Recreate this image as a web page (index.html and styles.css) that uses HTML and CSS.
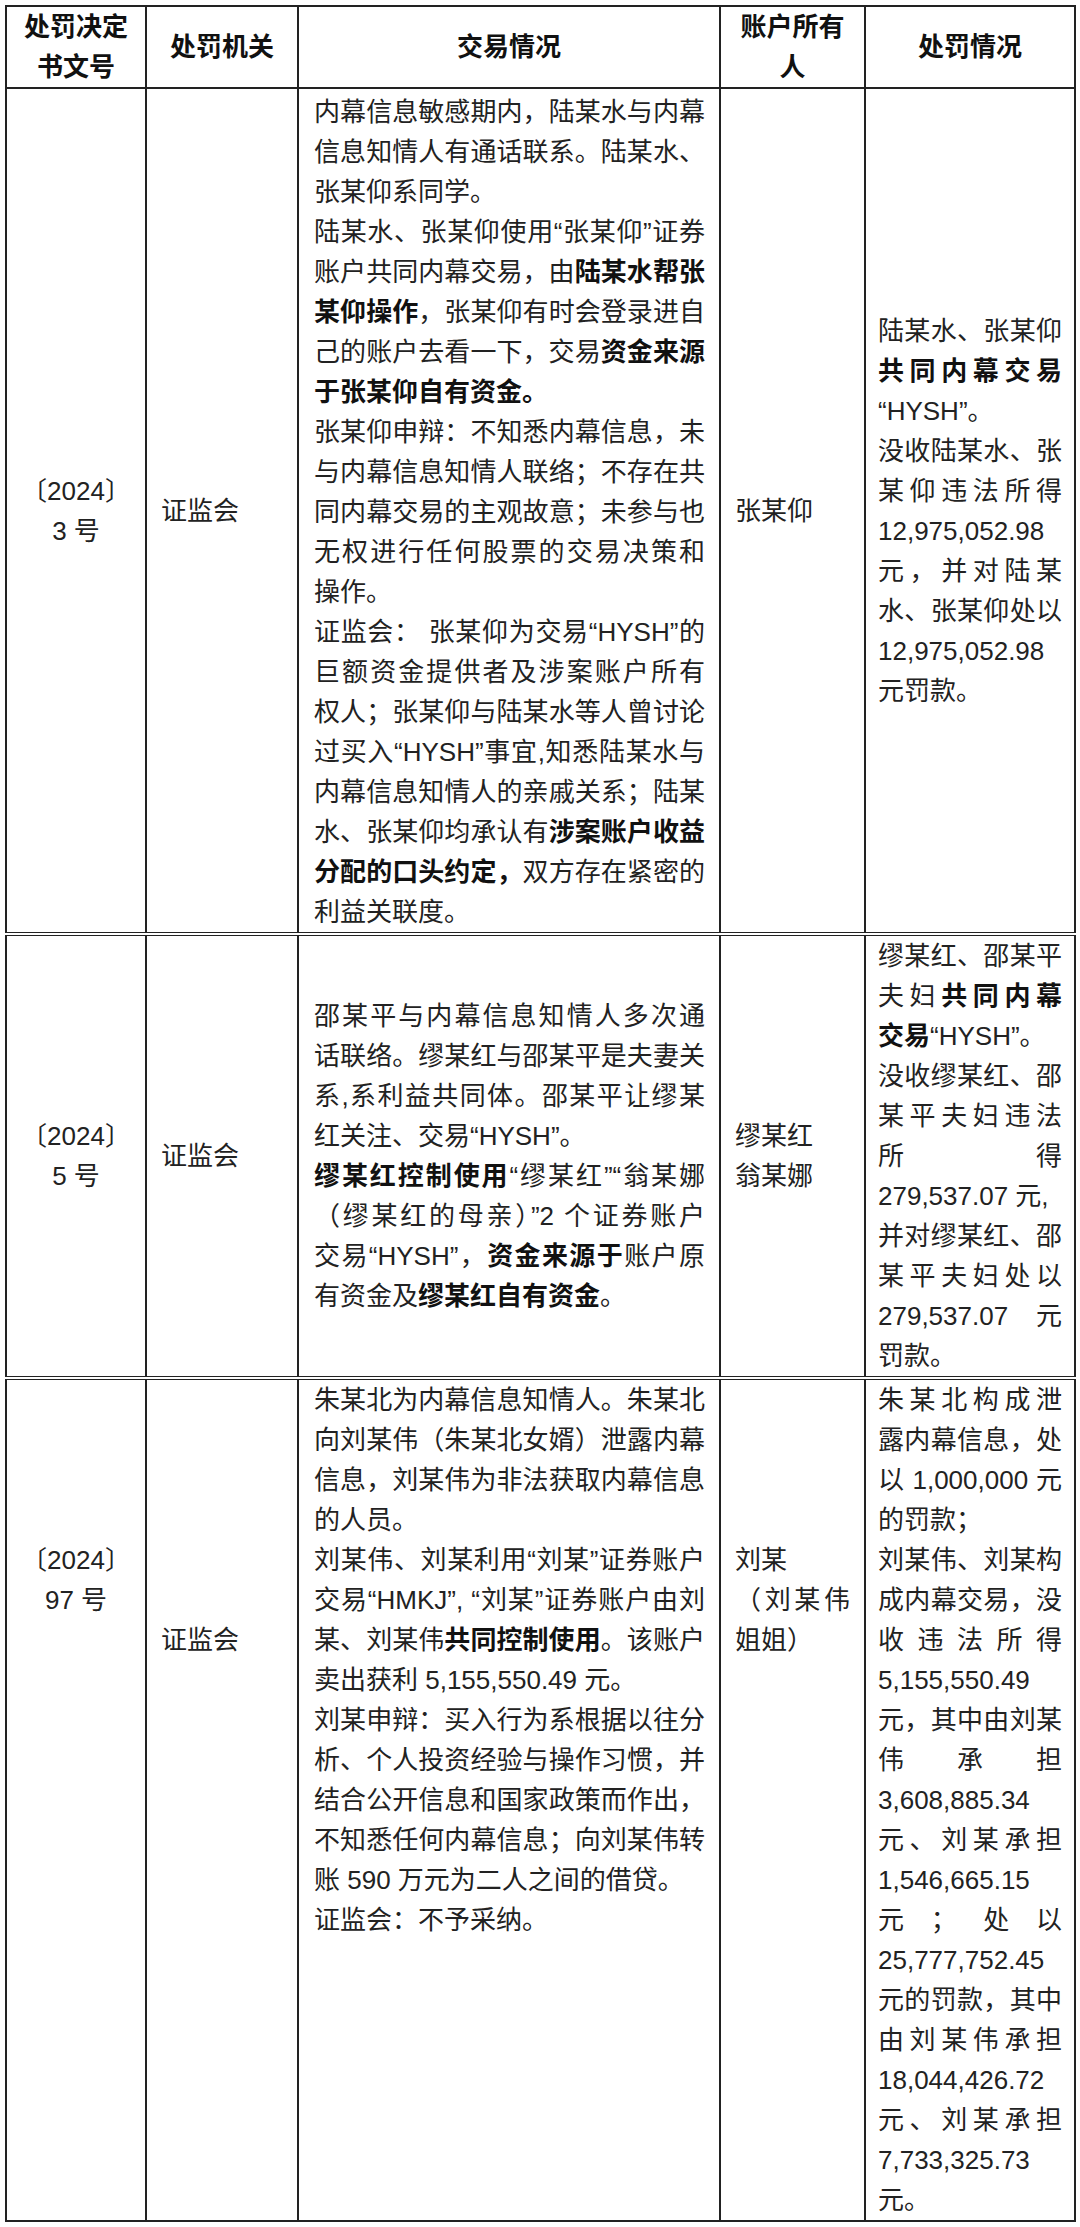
FILE: index.html
```html
<!DOCTYPE html>
<html lang="zh-CN">
<head>
<meta charset="utf-8">
<title>处罚决定</title>
<link rel="stylesheet" href="styles.css">
</head>
<body>
<table class="penalty">
  <colgroup>
    <col class="w-no">
    <col class="w-org">
    <col class="w-deal">
    <col class="w-owner">
    <col class="w-pen">
  </colgroup>
  <thead>
    <tr>
      <th>处罚决定书文号</th>
      <th>处罚机关</th>
      <th>交易情况</th>
      <th>账户所有人</th>
      <th>处罚情况</th>
    </tr>
  </thead>
  <tbody>
    <tr>
      <td class="c-no"><span class="case">〔2024〕</span><br>3 号</td>
      <td class="c-org">证监会</td>
      <td class="c-deal first">
        <p><span class="ln">内幕信息敏感期内，陆某水与内幕</span><span class="ln">信息知情人有通话联系。陆某水、</span><span class="ln e">张某仰系同学。</span></p>
        <p><span class="ln">陆某水、张某仰使用“张某仰”证券</span><span class="ln">账户共同内幕交易，由<b>陆某水帮张</b></span><span class="ln"><b>某仰操作</b>，张某仰有时会登录进自</span><span class="ln">己的账户去看一下，交易<b>资金来源</b></span><span class="ln e"><b>于张某仰自有资金。</b></span></p>
        <p><span class="ln">张某仰申辩：不知悉内幕信息，未</span><span class="ln">与内幕信息知情人联络；不存在共</span><span class="ln">同内幕交易的主观故意；未参与也</span><span class="ln">无权进行任何股票的交易决策和</span><span class="ln e">操作。</span></p>
        <p><span class="ln">证监会： 张某仰为交易“HYSH”的</span><span class="ln">巨额资金提供者及涉案账户所有</span><span class="ln">权人；张某仰与陆某水等人曾讨论</span><span class="ln">过买入“HYSH”事宜,知悉陆某水与</span><span class="ln">内幕信息知情人的亲戚关系；陆某</span><span class="ln">水、张某仰均承认有<b>涉案账户收益</b></span><span class="ln"><b>分配的口头约定，</b>双方存在紧密的</span><span class="ln e">利益关联度。</span></p>
      </td>
      <td class="c-owner">张某仰</td>
      <td class="c-pen">
        <p><span class="ln">陆某水、张某仰</span><span class="ln"><b>共同内幕交易</b></span><span class="ln e">“HYSH”。</span></p>
        <p><span class="ln">没收陆某水、张</span><span class="ln">某仰违法所得</span><span class="ln">12,975,052.98</span><span class="ln">元，并对陆某</span><span class="ln">水、张某仰处以</span><span class="ln">12,975,052.98</span><span class="ln e">元罚款。</span></p>
      </td>
    </tr>
    <tr class="sep">
      <td class="c-no"><span class="case">〔2024〕</span><br>5 号</td>
      <td class="c-org">证监会</td>
      <td class="c-deal">
        <p><span class="ln">邵某平与内幕信息知情人多次通</span><span class="ln">话联络。缪某红与邵某平是夫妻关</span><span class="ln">系,系利益共同体。邵某平让缪某</span><span class="ln e">红关注、交易“HYSH”。</span></p>
        <p><span class="ln"><b>缪某红控制使用</b>“缪某红”“翁某娜</span><span class="ln">（缪某红的母亲）”2 个证券账户</span><span class="ln">交易“HYSH”，<b>资金来源于</b>账户原</span><span class="ln e">有资金及<b>缪某红自有资金</b>。</span></p>
      </td>
      <td class="c-owner">缪某红<br>翁某娜</td>
      <td class="c-pen">
        <p><span class="ln">缪某红、邵某平</span><span class="ln">夫妇<b>共同内幕</b></span><span class="ln e"><b>交易</b>“HYSH”。</span></p>
        <p><span class="ln">没收缪某红、邵</span><span class="ln">某平夫妇违法</span><span class="ln">所得</span><span class="ln e">279,537.07 元,</span><span class="ln">并对缪某红、邵</span><span class="ln">某平夫妇处以</span><span class="ln">279,537.07 元</span><span class="ln e">罚款。</span></p>
      </td>
    </tr>
    <tr class="sep">
      <td class="c-no top off4"><span class="case">〔2024〕</span><br>97 号</td>
      <td class="c-org top off6">证监会</td>
      <td class="c-deal top">
        <p><span class="ln">朱某北为内幕信息知情人。朱某北</span><span class="ln">向刘某伟（朱某北女婿）泄露内幕</span><span class="ln">信息，刘某伟为非法获取内幕信息</span><span class="ln e">的人员。</span></p>
        <p><span class="ln">刘某伟、刘某利用“刘某”证券账户</span><span class="ln">交易“HMKJ”, “刘某”证券账户由刘</span><span class="ln">某、刘某伟<b>共同控制使用</b>。该账户</span><span class="ln e">卖出获利 5,155,550.49 元。</span></p>
        <p><span class="ln">刘某申辩：买入行为系根据以往分</span><span class="ln">析、个人投资经验与操作习惯，并</span><span class="ln">结合公开信息和国家政策而作出，</span><span class="ln">不知悉任何内幕信息；向刘某伟转</span><span class="ln e">账 590 万元为二人之间的借贷。</span></p>
        <p><span class="ln e">证监会：不予采纳。</span></p>
      </td>
      <td class="c-owner top off4">
        <p><span class="ln e">刘某</span><span class="ln">（刘某伟</span><span class="ln e">姐姐）</span></p>
      </td>
      <td class="c-pen top">
        <p><span class="ln">朱某北构成泄</span><span class="ln">露内幕信息，处</span><span class="ln">以 1,000,000 元</span><span class="ln e">的罚款；</span></p>
        <p><span class="ln">刘某伟、刘某构</span><span class="ln">成内幕交易，没</span><span class="ln">收违法所得</span><span class="ln">5,155,550.49</span><span class="ln">元，其中由刘某</span><span class="ln">伟承担</span><span class="ln">3,608,885.34</span><span class="ln">元、刘某承担</span><span class="ln">1,546,665.15</span><span class="ln">元；处以</span><span class="ln">25,777,752.45</span><span class="ln">元的罚款，其中</span><span class="ln">由刘某伟承担</span><span class="ln">18,044,426.72</span><span class="ln">元、刘某承担</span><span class="ln">7,733,325.73</span><span class="ln e">元。</span></p>
      </td>
    </tr>
  </tbody>
</table>
</body>
</html>
```

FILE: styles.css
```css
html, body {
  margin: 0;
  padding: 0;
  background: #ffffff;
}

body {
  color: #222222;
  font-family: "Liberation Sans", "Noto Sans CJK SC", sans-serif;
  font-size: 26px;
}

.penalty {
  border-collapse: collapse;
  table-layout: fixed;
  width: 1071px;
  margin: 5px 0 0 5px;
}

.w-no { width: 140px; }
.w-org { width: 152px; }
.w-deal { width: 422px; }
.w-owner { width: 145px; }
.w-pen { width: 210px; }

.penalty th,
.penalty td {
  border: 2px solid #222222;
  padding: 0 14px;
  line-height: 40px;
  vertical-align: middle;
  text-align: left;
}

.penalty th {
  font-weight: 700;
  text-align: center;
  color: #111111;
}

.penalty .sep td {
  border-top: 4px double #222222;
}

.penalty p {
  margin: 0;
}

.penalty b {
  font-weight: 700;
  color: #111111;
}

.ln {
  display: block;
  text-align: justify;
  text-align-last: justify;
}

.ln.e {
  text-align-last: left;
}

.penalty td.c-no {
  text-align: center;
  padding: 0 8px;
}

.case {
  font-feature-settings: "halt";
}

.penalty td.c-deal {
  padding: 0 14px 0 15px;
}

.penalty td.c-deal.first {
  padding-top: 3px;
}

.penalty td.c-pen {
  padding: 0 12px;
}

.penalty td.top {
  vertical-align: top;
}

.penalty td.off4 {
  padding-top: 160px;
}

.penalty td.off6 {
  padding-top: 240px;
}
```
